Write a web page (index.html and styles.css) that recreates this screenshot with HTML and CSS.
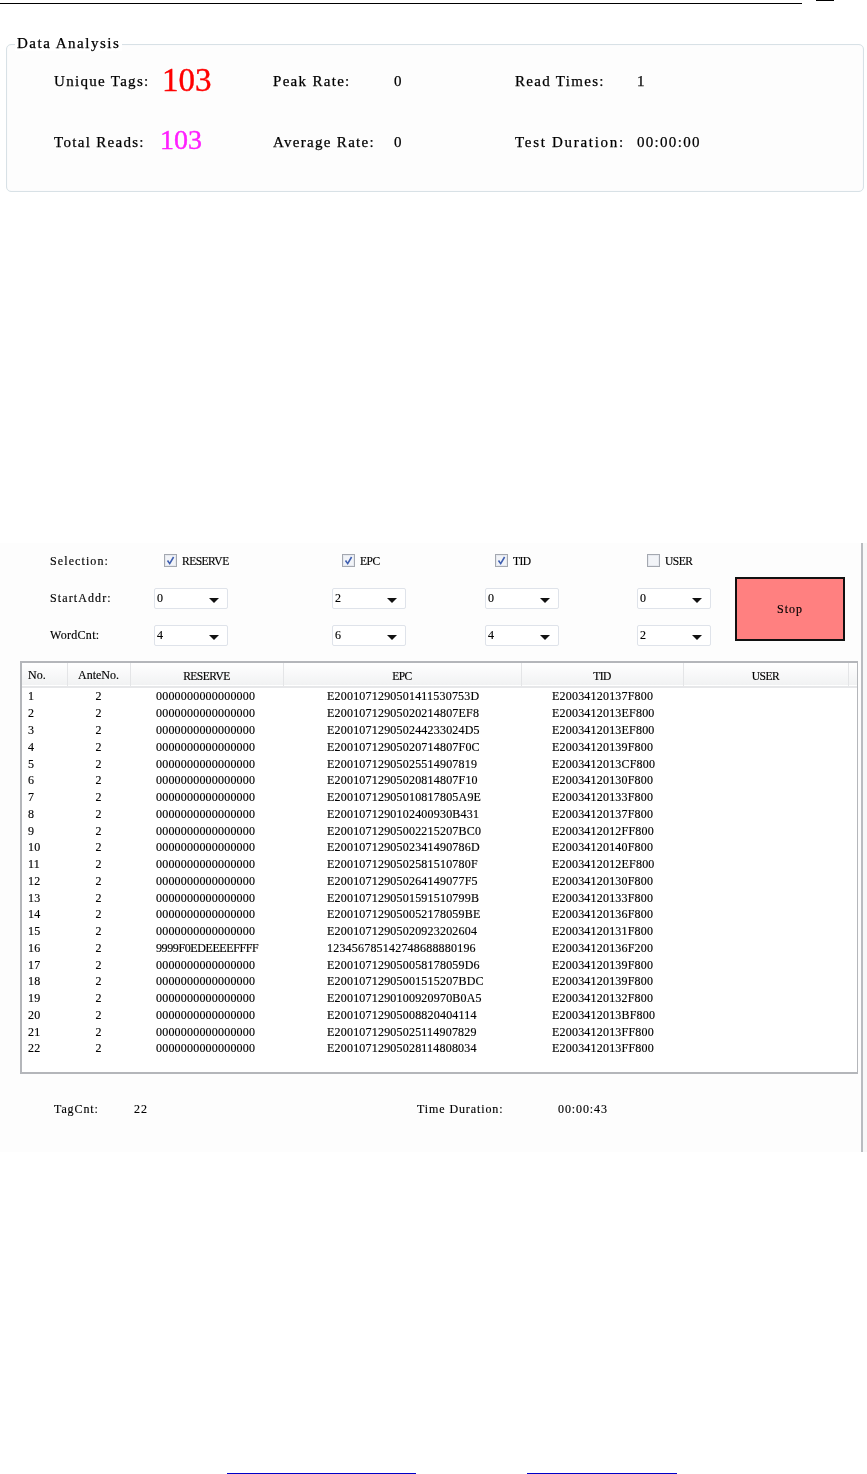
FILE: index.html
```html
<!DOCTYPE html>
<html lang="en">
<head>
<meta charset="utf-8">
<title>Data Analysis</title>
<link rel="stylesheet" href="styles.css">
</head>
<body>
<header class="page-head">
  <div class="head-rule"></div>
  <div class="head-mark"></div>
</header>

<fieldset class="analysis">
  <legend>Data Analysis</legend>
  <div class="stats">
    <span>Unique Tags:</span><span class="big-red">103</span>
    <span>Peak Rate:</span><span>0</span>
    <span>Read Times:</span><span>1</span>
    <span>Total Reads:</span><span class="big-pink">103</span>
    <span>Average Rate:</span><span>0</span>
    <span class="wide">Test Duration:</span><span>00:00:00</span>
  </div>
</fieldset>

<section class="panel">
  <div class="controls">
    <div class="control-grid">
      <span class="label">Selection:</span>
      <label class="check"><svg class="box" viewBox="0 0 13 13"><rect x=".5" y=".5" width="12" height="12" fill="#e6e9ef" stroke="#a4a8b0"/><rect x="2" y="2" width="9" height="9" fill="#f2f4f8"/><path d="M3.5 6.5 5.7 9.6 9.6 3" fill="none" stroke="#3f5fb0" stroke-width="1.6"/></svg>RESERVE</label>
      <label class="check"><svg class="box" viewBox="0 0 13 13"><rect x=".5" y=".5" width="12" height="12" fill="#e6e9ef" stroke="#a4a8b0"/><rect x="2" y="2" width="9" height="9" fill="#f2f4f8"/><path d="M3.5 6.5 5.7 9.6 9.6 3" fill="none" stroke="#3f5fb0" stroke-width="1.6"/></svg>EPC</label>
      <label class="check"><svg class="box" viewBox="0 0 13 13"><rect x=".5" y=".5" width="12" height="12" fill="#e6e9ef" stroke="#a4a8b0"/><rect x="2" y="2" width="9" height="9" fill="#f2f4f8"/><path d="M3.5 6.5 5.7 9.6 9.6 3" fill="none" stroke="#3f5fb0" stroke-width="1.6"/></svg>TID</label>
      <label class="check"><svg class="box" viewBox="0 0 13 13"><rect x=".5" y=".5" width="12" height="12" fill="#e6e9ef" stroke="#a4a8b0"/><rect x="2" y="2" width="9" height="9" fill="#f2f4f8"/></svg>USER</label>

      <span class="label">StartAddr:</span>
      <div class="combo">0</div>
      <div class="combo">2</div>
      <div class="combo">0</div>
      <div class="combo">0</div>

      <span class="label label-tight">WordCnt:</span>
      <div class="combo">4</div>
      <div class="combo">6</div>
      <div class="combo">4</div>
      <div class="combo">2</div>
    </div>
    <button class="stop" type="button">Stop</button>
  </div>

  <div class="table-box">
    <table class="tags">
      <colgroup>
        <col class="c-no"><col class="c-ante"><col class="c-res"><col class="c-epc"><col class="c-tid"><col class="c-user"><col class="c-end">
      </colgroup>
      <thead>
        <tr><th class="left">No.</th><th>AnteNo.</th><th class="caps">RESERVE</th><th class="caps">EPC</th><th class="caps">TID</th><th class="caps">USER</th><th></th></tr>
      </thead>
      <tbody>
        <tr><td>1</td><td class="mid">2</td><td>0000000000000000</td><td>E2001071290501411530753D</td><td>E20034120137F800</td><td></td><td></td></tr>
        <tr><td>2</td><td class="mid">2</td><td>0000000000000000</td><td>E20010712905020214807EF8</td><td>E2003412013EF800</td><td></td><td></td></tr>
        <tr><td>3</td><td class="mid">2</td><td>0000000000000000</td><td>E200107129050244233024D5</td><td>E2003412013EF800</td><td></td><td></td></tr>
        <tr><td>4</td><td class="mid">2</td><td>0000000000000000</td><td>E20010712905020714807F0C</td><td>E20034120139F800</td><td></td><td></td></tr>
        <tr><td>5</td><td class="mid">2</td><td>0000000000000000</td><td>E20010712905025514907819</td><td>E2003412013CF800</td><td></td><td></td></tr>
        <tr><td>6</td><td class="mid">2</td><td>0000000000000000</td><td>E20010712905020814807F10</td><td>E20034120130F800</td><td></td><td></td></tr>
        <tr><td>7</td><td class="mid">2</td><td>0000000000000000</td><td>E20010712905010817805A9E</td><td>E20034120133F800</td><td></td><td></td></tr>
        <tr><td>8</td><td class="mid">2</td><td>0000000000000000</td><td>E2001071290102400930B431</td><td>E20034120137F800</td><td></td><td></td></tr>
        <tr><td>9</td><td class="mid">2</td><td>0000000000000000</td><td>E20010712905002215207BC0</td><td>E2003412012FF800</td><td></td><td></td></tr>
        <tr><td>10</td><td class="mid">2</td><td>0000000000000000</td><td>E2001071290502341490786D</td><td>E20034120140F800</td><td></td><td></td></tr>
        <tr><td>11</td><td class="mid">2</td><td>0000000000000000</td><td>E2001071290502581510780F</td><td>E2003412012EF800</td><td></td><td></td></tr>
        <tr><td>12</td><td class="mid">2</td><td>0000000000000000</td><td>E200107129050264149077F5</td><td>E20034120130F800</td><td></td><td></td></tr>
        <tr><td>13</td><td class="mid">2</td><td>0000000000000000</td><td>E2001071290501591510799B</td><td>E20034120133F800</td><td></td><td></td></tr>
        <tr><td>14</td><td class="mid">2</td><td>0000000000000000</td><td>E200107129050052178059BE</td><td>E20034120136F800</td><td></td><td></td></tr>
        <tr><td>15</td><td class="mid">2</td><td>0000000000000000</td><td>E20010712905020923202604</td><td>E20034120131F800</td><td></td><td></td></tr>
        <tr><td>16</td><td class="mid">2</td><td class="hex">9999F0EDEEEEFFFF</td><td>123456785142748688880196</td><td>E20034120136F200</td><td></td><td></td></tr>
        <tr><td>17</td><td class="mid">2</td><td>0000000000000000</td><td>E200107129050058178059D6</td><td>E20034120139F800</td><td></td><td></td></tr>
        <tr><td>18</td><td class="mid">2</td><td>0000000000000000</td><td>E20010712905001515207BDC</td><td>E20034120139F800</td><td></td><td></td></tr>
        <tr><td>19</td><td class="mid">2</td><td>0000000000000000</td><td>E2001071290100920970B0A5</td><td>E20034120132F800</td><td></td><td></td></tr>
        <tr><td>20</td><td class="mid">2</td><td>0000000000000000</td><td>E20010712905008820404114</td><td>E2003412013BF800</td><td></td><td></td></tr>
        <tr><td>21</td><td class="mid">2</td><td>0000000000000000</td><td>E20010712905025114907829</td><td>E2003412013FF800</td><td></td><td></td></tr>
        <tr><td>22</td><td class="mid">2</td><td>0000000000000000</td><td>E20010712905028114808034</td><td>E2003412013FF800</td><td></td><td></td></tr>
      </tbody>
    </table>
  </div>

  <div class="summary">
    <span>TagCnt:</span><span>22</span><span>Time Duration:</span><span>00:00:43</span>
  </div>
</section>

<footer class="page-foot">
  <div class="sign sign-a"></div>
  <div class="sign sign-b"></div>
</footer>
</body>
</html>
```

FILE: styles.css
```css
* { box-sizing: border-box; }

html, body { margin: 0; padding: 0; }

body {
  width: 867px;
  height: 1474px;
  overflow: hidden;
  background: #fff;
  color: #000;
  font-family: "Liberation Serif", serif;
  display: flex;
  flex-direction: column;
}

.page-head {
  height: 44px;
  display: flex;
  align-items: flex-start;
  flex: none;
}
.head-rule { width: 802px; height: 1px; margin-top: 3px; background: #000; }
.head-mark { width: 18px; height: 1px; margin-left: 14px; background: #000; }

.analysis {
  flex: none;
  width: 858px;
  height: 148px;
  margin: 0 0 0 6px;
  padding: 0;
  border: 1px solid #d8e1e6;
  border-radius: 5px;
  background: #fdfdfd;
  box-shadow: inset 0 0 1px #e4ebef;
  position: relative;
  filter: blur(.3px);
  -webkit-text-stroke: .25px currentColor;
}
.analysis legend {
  position: absolute;
  top: -10px;
  left: 8px;
  padding: 0 2px;
  background: #fff;
  font-size: 15px;
  letter-spacing: 1.5px;
  line-height: 16px;
}

.stats {
  display: grid;
  grid-template-columns: 108px 111px 121px 121px 122px auto;
  grid-auto-rows: 61px;
  align-items: center;
  padding: 5px 0 0 47px;
  font-size: 15px;
  letter-spacing: 1.3px;
  line-height: 16px;
}
.stats .wide { letter-spacing: 1.7px; white-space: nowrap; }
.big-red, .big-pink { letter-spacing: 0; -webkit-text-stroke: .4px currentColor; }
.big-red { color: #ff0000; font-size: 33px; line-height: 40px; margin-top: -2px; }
.big-pink { color: #ff1fff; font-size: 28px; line-height: 40px; margin: -4px 0 0 -2px; }

.panel {
  flex: none;
  width: 867px;
  height: 609px;
  margin-top: 351px;
  padding: 0 9px 0 20px;
  background: linear-gradient(to right, #fdfdfd 861px, #b9bcc0 861px, #b9bcc0 863px, #f8f8f8 863px);
  font-size: 12px;
  filter: blur(.3px);
  -webkit-text-stroke: .15px currentColor;
}

.controls {
  display: flex;
  align-items: flex-start;
  height: 118px;
}
.control-grid {
  display: grid;
  grid-template-columns: 104px 178px 153px 152px 74px;
  grid-template-rows: repeat(3, 21px);
  row-gap: 16px;
  align-items: center;
  padding: 8px 0 0 30px;
  width: 715px;
}
.label { letter-spacing: 1.1px; }
.label-tight { letter-spacing: .3px; }
.check {
  display: flex;
  align-items: center;
  height: 19px;
  margin: -2px 0 0 10px;
  white-space: nowrap;
  font-size: 11.5px;
  letter-spacing: -.5px;
}
.box { width: 13px; height: 13px; margin-right: 5px; flex: none; }

.combo {
  width: 74px;
  height: 21px;
  padding-left: 2px;
  border: 1px solid #dfe3ea;
  border-radius: 2px;
  background: #fff;
  line-height: 19px;
  position: relative;
}
.combo::after {
  content: "";
  position: absolute;
  right: 8px;
  top: 9px;
  border: 5px solid transparent;
  border-top-color: #111;
  border-bottom: 0;
}

.stop {
  width: 110px;
  height: 64px;
  margin: 34px 0 0 0;
  padding: 0;
  border: 2px solid #111;
  background: #ff8080;
  color: #000;
  font: inherit;
  font-size: 12px;
  letter-spacing: 1px;
}

.table-box {
  width: 838px;
  height: 413px;
  border: 2px solid #b4b6ba;
  border-right-width: 1px;
  background: #fff;
  overflow: hidden;
}
.tags {
  width: 836px;
  table-layout: fixed;
  border-collapse: collapse;
  letter-spacing: .2px;
}
.c-no { width: 45px; }
.c-ante { width: 63px; }
.c-res { width: 153px; }
.c-epc { width: 238px; }
.c-tid { width: 162px; }
.c-user { width: 165px; }

.tags thead tr { height: 24px; background: linear-gradient(#fff, #f1f2f3); border-bottom: 2px solid #e6e7e9; }
.tags th {
  padding: 2px 0 0;
  font-weight: normal;
  letter-spacing: 0;
  border-right: 1px solid #e4e5e7;
}
.tags th.caps { font-size: 11.5px; letter-spacing: -.5px; }
.tags th.left { text-align: left; padding-left: 6px; }

.tags tbody tr { height: 16.76px; }
.tags tbody tr:first-child { height: 18px; }
.tags tbody tr:first-child td { padding-bottom: 2px; }
.tags td { padding: 0; white-space: nowrap; line-height: 12px; }
.tags td:nth-child(1) { padding-left: 6px; }
.tags td.mid { text-align: center; }
.tags td:nth-child(3) { padding-left: 26px; }
.tags td:nth-child(4) { padding-left: 44px; }
.tags td:nth-child(5) { padding-left: 31px; }
.tags td.hex { letter-spacing: -.4px; }

.summary {
  display: grid;
  grid-template-columns: 80px 283px 141px auto;
  padding: 28px 0 0 34px;
  line-height: 14px;
  letter-spacing: .9px;
}

.page-foot {
  flex: none;
  margin-top: 321px;
  height: 1px;
  display: flex;
  padding-left: 227px;
  gap: 111px;
}
.sign { height: 1px; background: #0000c8; }
.sign-a { width: 189px; }
.sign-b { width: 150px; }
```
